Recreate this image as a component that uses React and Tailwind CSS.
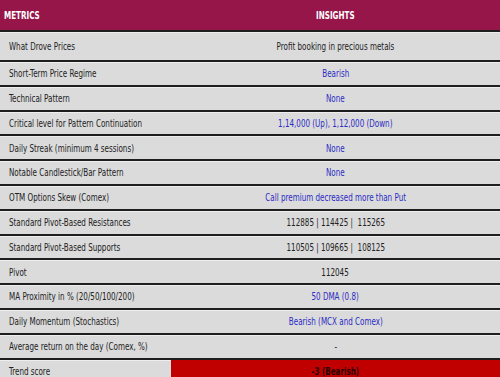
import React from 'react';

const rows = [
  { metric: 'What Drove Prices', insight: 'Profit booking in precious metals', tone: 'dark', tall: true },
  { metric: 'Short-Term Price Regime', insight: 'Bearish', tone: 'blue' },
  { metric: 'Technical Pattern', insight: 'None', tone: 'blue' },
  { metric: 'Critical level for Pattern Continuation', insight: '1,14,000 (Up), 1,12,000 (Down)', tone: 'blue' },
  { metric: 'Daily Streak (minimum 4 sessions)', insight: 'None', tone: 'blue' },
  { metric: 'Notable Candlestick/Bar Pattern', insight: 'None', tone: 'blue' },
  { metric: 'OTM Options Skew (Comex)', insight: 'Call premium decreased more than Put', tone: 'blue' },
  { metric: 'Standard Pivot-Based Resistances', insight: '112885 | 114425 |  115265', tone: 'dark' },
  { metric: 'Standard Pivot-Based Supports', insight: '110505 | 109665 |  108125', tone: 'dark' },
  { metric: 'Pivot', insight: '112045', tone: 'dark' },
  { metric: 'MA Proximity in % (20/50/100/200)', insight: '50 DMA (0.8)', tone: 'blue' },
  { metric: 'Daily Momentum (Stochastics)', insight: 'Bearish (MCX and Comex)', tone: 'blue' },
  { metric: 'Average return on the day (Comex, %)', insight: '-', tone: 'dark' },
];

// the source uses a narrow Tahoma-like face, so squeeze DejaVu Condensed horizontally
const font = { fontFamily: '"DejaVu Sans Condensed", "DejaVu Sans", sans-serif' };

const Left = ({ children }) => (
  <span className="inline-block whitespace-nowrap scale-x-[0.76] origin-left">{children}</span>
);
const Mid = ({ children }) => (
  <span className="inline-block whitespace-pre scale-x-[0.76] origin-center">{children}</span>
);

export default function App() {
  return (
    <div className="w-[500px] h-[377px] overflow-hidden bg-white text-[10.5px] leading-none" style={font}>
      {/* header */}
      <div className="flex h-[30px] items-center bg-[#961649] text-white font-bold">
        <div className="w-[171px] pl-[4px]"><Left>METRICS</Left></div>
        <div className="flex-1 flex justify-center"><Mid>INSIGHTS</Mid></div>
      </div>

      {rows.map((r) => (
        <div
          key={r.metric}
          className={`flex items-center bg-[#dbdbdb] border-t-2 border-[#1e1e1e] shadow-[inset_0_1px_0_#eeeeee] ${r.tall ? 'h-[30px]' : 'h-[24.8px]'}`}
        >
          <div className="w-[171px] pl-[9px] text-[#222222]"><Left>{r.metric}</Left></div>
          <div className={`flex-1 flex justify-center ${r.tone === 'blue' ? 'text-[#2b2bc4]' : 'text-[#222222]'}`}>
            <Mid>{r.insight}</Mid>
          </div>
        </div>
      ))}

      {/* trend score */}
      <div className="flex h-[25px] border-t-2 border-[#1e1e1e]">
        <div className="w-[171px] pl-[9px] flex items-center bg-[#dbdbdb] text-[#222222] shadow-[inset_0_1px_0_#eeeeee]">
          <Left>Trend score</Left>
        </div>
        <div className="flex-1 flex items-center justify-center bg-[#c00000] text-[#2a0000] font-bold">
          <Mid>-3 (Bearish)</Mid>
        </div>
      </div>
    </div>
  );
}
